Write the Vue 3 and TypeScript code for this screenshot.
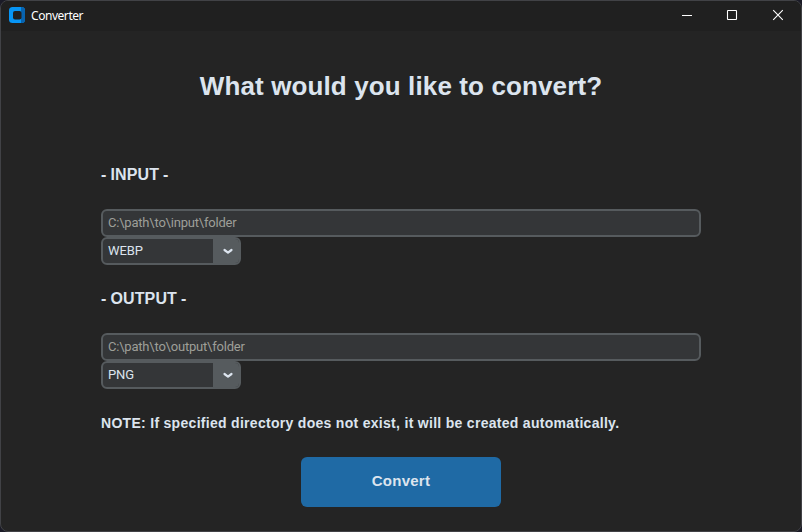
<script setup lang="ts">
import { ref } from 'vue'

interface Section {
  id: string
  label: string
  placeholder: string
  format: string
}

const sections: Section[] = [
  { id: 'input', label: 'INPUT', placeholder: 'C:\\path\\to\\input\\folder', format: 'WEBP' },
  { id: 'output', label: 'OUTPUT', placeholder: 'C:\\path\\to\\output\\folder', format: 'PNG' },
]
const paths = ref<string[]>(['', ''])
</script>

<template>
  <div class="window">
    <header class="titlebar">
      <svg class="logo" width="16" height="16" viewBox="0 0 16 16">
        <rect width="16" height="16" rx="3.5" fill="#0795f5" />
        <path d="M12 0h.5A3.5 3.5 0 0 1 16 3.5v9a3.5 3.5 0 0 1-3.500 3.500H12z" fill="#0863af" />
        <rect x="4" y="4" width="8.500" height="8.600" rx="2" fill="#202020" />
      </svg>
      <span class="app-name">Converter</span>
      <div class="controls">
        <svg width="12" height="12" viewBox="0 0 12 12"><path d="M2 6.500h10" /></svg>
        <svg width="12" height="12" viewBox="0 0 12 12"><rect x="1.500" y="1.500" width="9" height="9" rx="0.500" /></svg>
        <svg width="12" height="12" viewBox="0 0 12 12"><path d="M1.200 1.200l9.600 9.600M10.800 1.200l-9.600 9.600" /></svg>
      </div>
    </header>
    <main class="content">
      <h1>What would you like to convert?</h1>
      <section v-for="(s, i) in sections" :key="s.id" class="section">
        <h2><span>-</span><span>{{ s.label }}</span><span>-</span></h2>
        <input v-model="paths[i]" class="entry" type="text" :placeholder="s.placeholder" />
        <div class="combo">
          <span class="value">{{ s.format }}</span>
          <span class="arrow">
            <svg width="12" height="8" viewBox="0 0 12 8"><path d="M2.500 3L6 5.600L9.500 3" /></svg>
          </span>
        </div>
      </section>
      <p class="note">NOTE: If specified directory does not exist, it will be created automatically.</p>
      <button type="button">Convert</button>
    </main>
  </div>
</template>

<style>
body {
  background: #1b1b27;
}
</style>

<style scoped>
.window {
  box-sizing: border-box;
  width: 802px;
  height: 532px;
  border: 1px solid #414246;
  border-radius: 8px;
  background: #242424;
  color: #dce4ee;
  overflow: hidden;
  font-family: Roboto, "Liberation Sans", sans-serif;
}
.titlebar {
  display: flex;
  align-items: center;
  height: 30px;
  padding-left: 8px;
  background: #202020;
}
.logo {
  margin-top: -2px;
}
.app-name {
  margin-left: 6px;
  color: #fff;
  font: 12px/16px "Noto Sans", sans-serif;
  letter-spacing: -0.45px;
}
.controls {
  display: flex;
  gap: 34px;
  margin-left: auto;
  padding-right: 17px;
}
.controls svg {
  display: block;
  margin-top: -2px;
  fill: none;
  stroke: #fff;
  stroke-width: 1.1;
}
.content {
  display: flex;
  flex-direction: column;
  padding: 0 100px;
}
h1 {
  margin: 38px 0 59px;
  text-align: center;
  white-space: nowrap;
  font: bold 26px/34px "Liberation Sans", sans-serif;
  letter-spacing: 0.12px;
}
.section {
  height: 124px;
}
h2 {
  display: flex;
  gap: 4px;
  margin: 0;
  padding: 3px 0 24px;
  font: bold 16px/20px "Liberation Sans", sans-serif;
  letter-spacing: 0.12px;
}
.entry {
  display: block;
  box-sizing: border-box;
  width: 600px;
  height: 28px;
  padding: 0 5px 2px;
  border: 2px solid #565b5e;
  border-radius: 6px;
  outline: none;
  background: #343638;
  color: #dce4ee;
  font: 13px/22px Roboto, sans-serif;
  letter-spacing: -0.2px;
}
.entry::placeholder {
  color: #9e9f98;
  opacity: 1;
}
.combo {
  display: flex;
  box-sizing: border-box;
  width: 140px;
  height: 28px;
  border: 2px solid #565b5e;
  border-radius: 6px;
  background: #343638;
  overflow: hidden;
}
.value {
  flex: 1;
  padding-left: 5px;
  font: 13px/24px Roboto, sans-serif;
  letter-spacing: -0.1px;
}
.arrow {
  display: flex;
  align-items: center;
  justify-content: center;
  box-sizing: border-box;
  width: 26px;
  padding-left: 3px;
  background: #565b5e;
}
.arrow svg {
  fill: none;
  stroke: #dce4ee;
  stroke-width: 2.2;
  stroke-linecap: round;
  stroke-linejoin: round;
}
.note {
  margin: 3px 0 24px;
  white-space: nowrap;
  font: bold 14px/20px "Liberation Sans", sans-serif;
  letter-spacing: 0.295px;
}
button {
  align-self: center;
  width: 200px;
  height: 50px;
  padding: 0 0 2px;
  border: 0;
  border-radius: 6px;
  background: #1f6aa5;
  color: #dce4ee;
  font: bold 15px/20px "Liberation Sans", sans-serif;
  letter-spacing: 0.25px;
}
</style>
